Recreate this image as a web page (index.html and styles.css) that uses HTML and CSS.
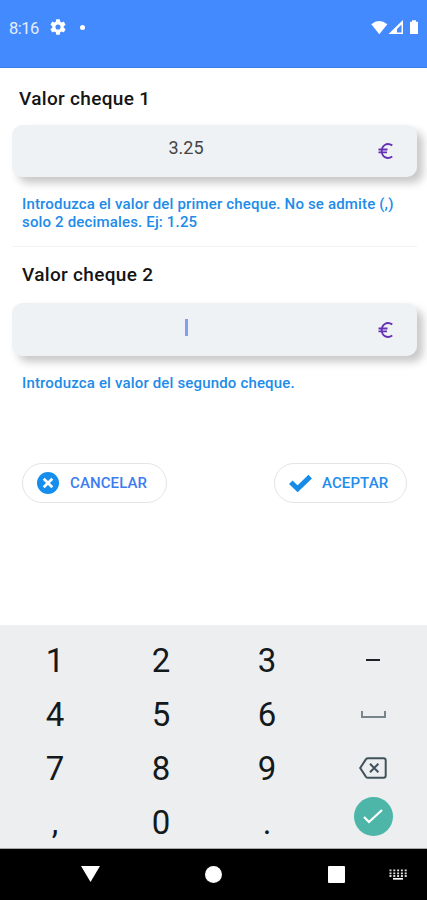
FILE: index.html
```html
<!DOCTYPE html>
<html lang="es">
<head>
<meta charset="utf-8">
<meta name="viewport" content="width=device-width, initial-scale=1">
<title>Valor cheque</title>
<link rel="stylesheet" href="styles.css">
</head>
<body>
<header class="statusbar">
  <span class="clock">8:16</span>
  <svg class="gear" width="16" height="16" viewBox="2 2 20 20"><path fill="#fff" fill-rule="evenodd" d="M19.14 12.94c.04-.3.06-.61.06-.94s-.02-.64-.07-.94l2.03-1.58a.49.49 0 0 0 .12-.61l-1.92-3.32a.49.49 0 0 0-.59-.22l-2.39.96a7 7 0 0 0-1.62-.94l-.36-2.54a.48.48 0 0 0-.48-.41h-3.84a.47.47 0 0 0-.47.41l-.36 2.54c-.59.24-1.13.57-1.62.94l-2.39-.96a.48.48 0 0 0-.59.22L2.74 8.87a.47.47 0 0 0 .12.61l2.03 1.58a6 6 0 0 0 0 1.88l-2.03 1.58a.49.49 0 0 0-.12.61l1.92 3.32c.12.22.37.29.59.22l2.39-.96c.5.38 1.03.7 1.62.94l.36 2.54c.05.24.24.41.48.41h3.84c.24 0 .44-.17.47-.41l.36-2.54c.59-.24 1.13-.56 1.62-.94l2.39.96c.22.08.47 0 .59-.22l1.92-3.32a.47.47 0 0 0-.12-.61zM12 15.2a3.2 3.2 0 1 1 0-6.4 3.2 3.2 0 0 1 0 6.4z"/></svg>
  <i class="dot"></i>
  <svg class="signals" width="49" height="16" viewBox="0 0 49 16"><g fill="#fff"><path d="M.3 4.300Q8-2.500 16.300 4.300L8.300 14.200Z"/><path fill-rule="evenodd" d="M32 0V14H17.500ZM30.500 4.500L26 9V12.500H30.500Z"/><path d="M41 .2h4v1.500h2V14h-8V1.700h2Z"/></g></svg>
</header>
<main class="form">
  <h2 class="title">Valor cheque 1</h2>
  <div class="field"><span class="value">3.25</span>
    <svg class="euro" width="15" height="16" viewBox="0 0 15 16"><path d="M14.300 2.400C8.500-1 3.700 2.600 3.700 8s5 9 10.600 5.600M.5 6.500H9.500M.5 9.300H9" fill="none" stroke="#6430b4" stroke-width="1.800"/></svg>
  </div>
  <p class="hint">Introduzca el valor del primer cheque. No se admite (,)<br>solo 2 decimales. Ej: 1.25</p>
  <h2 class="title second">Valor cheque 2</h2>
  <div class="field tall"><i class="caret"></i>
    <svg class="euro" width="15" height="16" viewBox="0 0 15 16"><path d="M14.300 2.400C8.500-1 3.700 2.600 3.700 8s5 9 10.600 5.600M.5 6.500H9.500M.5 9.300H9" fill="none" stroke="#6430b4" stroke-width="1.800"/></svg>
  </div>
  <p class="hint last">Introduzca el valor del segundo cheque.</p>
  <div class="actions">
    <button class="btn cancel"><svg width="22" height="22" viewBox="0 0 22 22"><circle cx="11" cy="11" r="11" fill="#168eee"/><path d="M6.700 6.700l8.600 8.600M15.300 6.700l-8.600 8.600" stroke="#fff" stroke-width="2.700"/></svg><span>CANCELAR</span></button>
    <button class="btn accept"><svg width="23" height="18" viewBox="0 0 23 18"><path d="M1.800 8.300L8.600 14.800L21.200 2.600" fill="none" stroke="#168be8" stroke-width="5"/></svg><span>ACEPTAR</span></button>
  </div>
</main>
<section class="keypad">
  <span>1</span><span>2</span><span>3</span><span><i class="minus"></i></span>
  <span>4</span><span>5</span><span>6</span><span><i class="space"></i></span>
  <span>7</span><span>8</span><span>9</span>
  <span><svg width="28" height="22" viewBox="0 0 28 22"><path d="M9 1.200H24.500Q26.700 1.200 26.700 3.400V18.600Q26.700 20.800 24.500 20.800H9Q7.800 20.800 7 19.800L1.200 11 7 2.200Q7.800 1.200 9 1.200Z" fill="none" stroke="#40535b" stroke-width="2"/><path d="M11 6.800l8.400 8.400M19.400 6.800L11 15.200" stroke="#40535b" stroke-width="2"/></svg></span>
  <span>,</span><span>0</span><span>.</span>
  <span><b class="done"><svg width="20" height="15" viewBox="0 0 20 15"><path d="M1 8l5 5L19 1" fill="none" stroke="#fff" stroke-width="2.200"/></svg></b></span>
</section>
<nav class="navbar">
  <svg class="back" width="19" height="16" viewBox="0 0 19 16"><path d="M0 0h19L9.500 16Z" fill="#fff"/></svg>
  <i class="home"></i>
  <i class="recent"></i>
  <svg class="kbd" width="18" height="11" viewBox="0 0 18 11"><path d="M.5 1.300H18M.5 4.300H18M.5 7H18" stroke="#ddd" stroke-width="1.800" stroke-dasharray="2 1.800"/><path d="M4 9.800H14" stroke="#fff" stroke-width="1.700"/></svg>
</nav>
</body>
</html>
```
FILE: styles.css
```css
* { box-sizing: border-box; }
body {
  margin: 0;
  width: 427px;
  height: 900px;
  overflow: hidden;
  display: flex;
  flex-direction: column;
  background: #fff;
  font-family: Roboto, sans-serif;
}
svg { display: block; flex: none; }
i, b { display: block; flex: none; }
.statusbar {
  height: 68px;
  padding: 0 7px 13px 9px;
  display: flex;
  align-items: center;
  background: #448aff;
  border-bottom: 1px solid #3b7fea;
  color: #e4efff;
}
.clock { width: 41px; font-size: 16.5px; letter-spacing: -0.5px; padding-top: 2px; }
.dot { width: 5px; height: 5px; margin-left: 14px; border-radius: 50%; background: #fff; }
.signals { margin-left: auto; margin-top: 2px; }
.form { flex: none; height: 557px; padding: 0 10px 0 12px; }
.title {
  margin: 0;
  height: 57px;
  padding: 1px 0 0 7px;
  line-height: 59px;
  font-size: 19px;
  font-weight: 500;
  letter-spacing: .32px;
  color: #151515;
  white-space: nowrap;
}
.title.second { padding-left: 10px; line-height: 53px; border-top: 1px solid #f3f3f3; }
.field {
  height: 52px;
  padding: 0 24px 0 0;
  display: flex;
  align-items: center;
  border-radius: 10px;
  background: #eff2f5;
  box-shadow: 6px 6px 8px rgba(0, 0, 0, .22);
}
.tall { height: 53px; }
.value { flex: 1; padding: 0 18px 8px 0; text-align: center; font-size: 18px; color: #444; }
.caret { width: 3px; height: 17px; margin: 0 auto 5px 173px; background: #829eee; }
.hint {
  margin: 0;
  height: 69px;
  padding: 18px 0 0 10px;
  font-size: 15px;
  line-height: 18px;
  font-weight: 500;
  letter-spacing: .165px;
  color: #218be9;
  white-space: nowrap;
}
.hint.last { height: 107px; }
.actions { display: flex; justify-content: space-between; padding: 0 10px; }
.btn {
  height: 40px;
  padding: 0;
  display: flex;
  align-items: center;
  border: 1px solid #e3e4e8;
  border-radius: 20px;
  background: #fff;
  font: 500 15px Roboto, sans-serif;
  letter-spacing: .1px;
  color: #3d7cf0;
}
.cancel { width: 145px; padding-left: 14px; gap: 11px; }
.accept { width: 133px; padding-left: 14px; gap: 10px; color: #248cec; }
.keypad {
  flex: none;
  height: 224px;
  padding: 8px 1px 0 2px;
  display: grid;
  grid-template-columns: repeat(4, 1fr);
  grid-template-rows: repeat(4, 54px);
  background: #eceef0;
  border-bottom: 1px solid #a5a7a8;
  font-size: 33px;
  color: #14191c;
}
.keypad span { display: flex; align-items: center; justify-content: center; }
.minus { width: 14px; height: 2.5px; background: #1c2226; }
.space { width: 25px; height: 7px; border: 2px solid #77858a; border-top: 0; }
.done {
  width: 39px;
  height: 39px;
  margin-bottom: 12px;
  display: flex;
  align-items: center;
  justify-content: center;
  border-radius: 50%;
  background: #4db6a8;
}
.navbar {
  height: 51px;
  flex: none;
  padding-left: 81px;
  display: flex;
  align-items: center;
  background: #000;
}
.back { margin-bottom: 2px; }
.home { width: 17px; height: 17px; margin-left: 105px; border-radius: 50%; background: #fff; }
.recent { width: 17px; height: 17px; margin-left: 106px; border-radius: 1px; background: #fff; }
.kbd { margin-left: 44px; }
```
